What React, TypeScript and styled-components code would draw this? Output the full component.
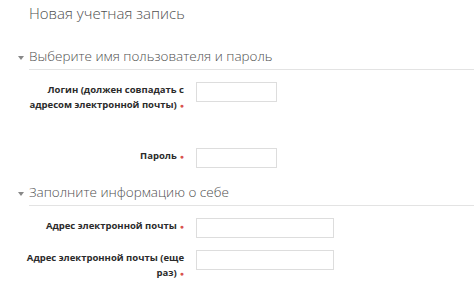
import styled, { createGlobalStyle } from "styled-components";

const GlobalStyle = createGlobalStyle`
  body {
    margin: 0;
    background: #fff;
    font-family: "Open Sans", "Liberation Sans", sans-serif;
  }
`;

const Page = styled.div`
  padding: 2px 0 0 29px;
  width: 474px;
  height: 285px;
  box-sizing: border-box;
  overflow: hidden;
`;

const Title = styled.h2`
  margin: 0;
  font-size: 15px;
  line-height: 22px;
  font-weight: 300;
  color: #4f4f4f;
`;

const Fieldset = styled.section<{ $top: number }>`
  margin-top: ${(p) => p.$top}px;
`;

const Legend = styled.div`
  display: flex;
  align-items: center;
  margin-left: -12px;
`;

const Caret = styled.span`
  width: 12px;
  display: flex;
  align-items: center;
  padding-left: 1px;
  box-sizing: border-box;
  &::before {
    content: "";
    border-left: 3.5px solid transparent;
    border-right: 3.5px solid transparent;
    border-top: 4px solid #888;
  }
`;

const LegendText = styled.div`
  flex: 1;
  font-size: 13.5px;
  line-height: 22px;
  font-weight: 300;
  color: #4f4f4f;
  padding-bottom: 2px;
  border-bottom: 1px solid #e3e3e3;
`;

const Row = styled.div<{ $top: number }>`
  display: grid;
  grid-template-columns: 165px auto;
  column-gap: 12px;
  align-items: start;
  margin: ${(p) => p.$top}px 0 0 -10px;
`;

const Label = styled.label`
  text-align: right;
  font-size: 9.5px;
  line-height: 15px;
  font-weight: 700;
  color: #2b2b2b;
`;

const Req = styled.span`
  color: #d9534f;
  font-weight: 400;
  margin-left: 3px;
  font-size: 7px;
  line-height: 1;
`;

const Input = styled.input<{ $w: number }>`
  width: ${(p) => p.$w}px;
  height: 20px;
  box-sizing: border-box;
  border: 1px solid #ddd;
  border-radius: 0;
  margin: 0;
  padding: 0 4px;
  background: #fff;
  outline: none;
`;

export default function App() {
  return (
    <>
      <GlobalStyle />
      <Page>
        <Title>Новая учетная запись</Title>
        <Fieldset $top={21}>
          <Legend>
            <Caret />
            <LegendText>Выберите имя пользователя и пароль</LegendText>
          </Legend>
          <Row $top={12}>
            <Label>
              Логин (должен совпадать с адресом электронной почты)
              <Req>●</Req>
            </Label>
            <Input $w={81} />
          </Row>
          <Row $top={36}>
            <Label>
              Пароль<Req>●</Req>
            </Label>
            <Input $w={81} />
          </Row>
        </Fieldset>
        <Fieldset $top={13}>
          <Legend>
            <Caret />
            <LegendText>Заполните информацию о себе</LegendText>
          </Legend>
          <Row $top={12}>
            <Label>
              Адрес электронной почты<Req>●</Req>
            </Label>
            <Input $w={138} />
          </Row>
          <Row $top={12}>
            <Label>
              Адрес электронной почты (еще раз)<Req>●</Req>
            </Label>
            <Input $w={138} />
          </Row>
        </Fieldset>
      </Page>
    </>
  );
}
